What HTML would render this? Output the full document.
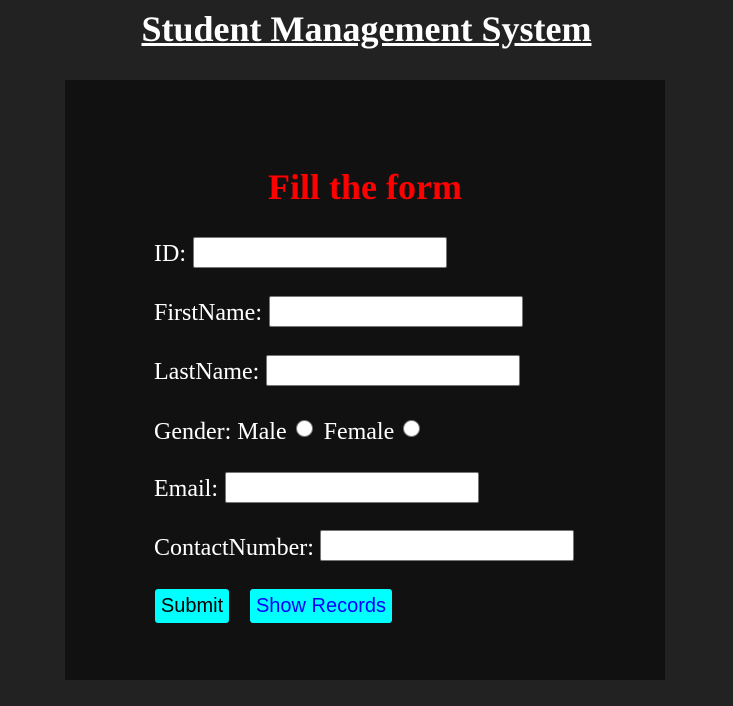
<!DOCTYPE html>
<html><head><meta charset="utf-8"><style>
html,body{margin:0;padding:0;width:733px;height:706px;background:#222;overflow:hidden;font-family:"Liberation Serif",serif;color:#fff}
h1{position:absolute;left:0;width:733px;top:8px;margin:0;text-align:center;font-size:36px;font-weight:bold;text-decoration:underline;line-height:42px}
.box{position:absolute;left:65px;top:80px;width:600px;height:600px;background:#111}
h2{position:absolute;left:0;width:600px;top:86px;margin:0;text-align:center;color:#f00;font-size:36px;line-height:42px;font-weight:bold}
.l{position:absolute;left:154px;font-size:24px;line-height:26px;white-space:nowrap}
.in{position:absolute;width:252px;height:29px;background:#fff;border:1px solid #767676;border-radius:2px;box-sizing:content-box}
.r{display:inline-block;width:15px;height:15px;border-radius:50%;background:#fff;border:1px solid #767676;vertical-align:2px;margin:0 5px 0 9px}
.b{position:absolute;top:589px;height:34px;background:#0ff;border-radius:3px;font-family:"Liberation Sans",sans-serif;font-size:20px;line-height:34px;text-align:center}
</style></head><body>
<h1>Student Management System</h1>
<div class="box"><h2>Fill the form</h2></div>
<div class="l" style="top:241px">ID:</div><div class="in" style="left:193px;top:237px"></div>
<div class="l" style="top:300px">FirstName:</div><div class="in" style="left:269px;top:296px"></div>
<div class="l" style="top:359px">LastName:</div><div class="in" style="left:266px;top:355px"></div>
<div class="l" style="top:419px">Gender: Male<span class="r"></span> Female<span class="r"></span></div>
<div class="l" style="top:476px">Email:</div><div class="in" style="left:225px;top:472px"></div>
<div class="l" style="top:535px">ContactNumber:</div><div class="in" style="left:320px;top:530px"></div>
<div class="b" style="left:155px;width:74px;color:#000">Submit</div>
<div class="b" style="left:250px;width:142px;color:#00f">Show Records</div>
</body></html>
